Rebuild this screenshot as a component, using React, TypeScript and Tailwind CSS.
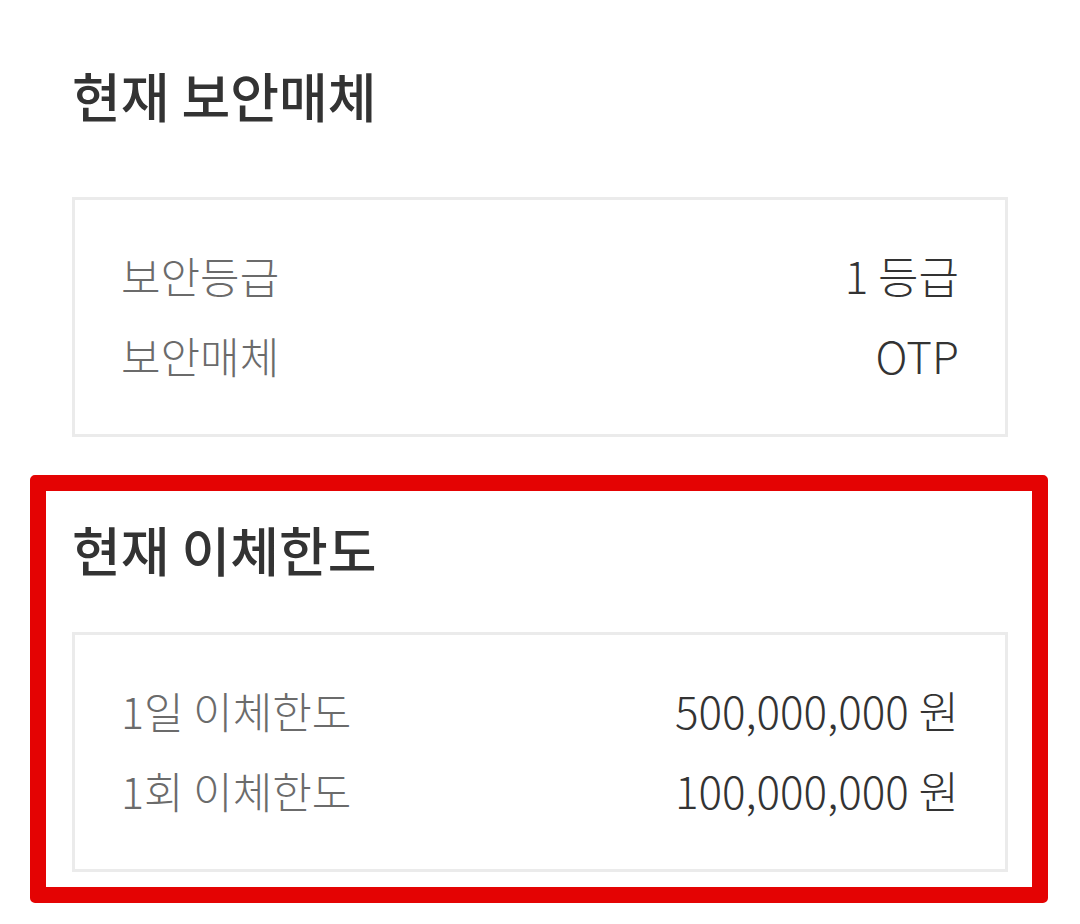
const FONT = "font-['Noto_Sans_CJK_KR','Noto_Sans',sans-serif]";

type Row = { label: string; value: string };

function InfoBox({ rows }: { rows: Row[] }) {
  return (
    <div className="border-[3px] border-[#ebebeb] bg-white px-[46px] pt-[35px] pb-[39px]">
      {rows.map((r) => (
        <div key={r.label} className="flex h-[80px] items-center justify-between">
          <span className="text-[43px] font-light text-[#6b6b6b]">{r.label}</span>
          <span className="text-[44px] font-light text-[#333333]">{r.value}</span>
        </div>
      ))}
    </div>
  );
}

export default function App() {
  return (
    <div className={`${FONT} min-h-[924px] w-[1080px] bg-white px-[72px] pt-[59px]`}>
      <h2 className="h-[72px] text-[53px] leading-[72px] font-medium text-[#333333]">현재 보안매체</h2>
      <div className="mt-[66px]">
        <InfoBox
          rows={[
            { label: "보안등급", value: "1 등급" },
            { label: "보안매체", value: "OTP" },
          ]}
        />
      </div>

      {/* 강조 표시된 이체한도 영역 */}
      <div className="relative mt-[76px]">
        <h2 className="h-[72px] text-[53px] leading-[72px] font-medium text-[#333333]">현재 이체한도</h2>
        <div className="mt-[47px]">
          <InfoBox
            rows={[
              { label: "1일 이체한도", value: "500,000,000 원" },
              { label: "1회 이체한도", value: "100,000,000 원" },
            ]}
          />
        </div>
        <div className="pointer-events-none absolute top-[-38px] right-[-40px] bottom-[-31px] left-[-42px] rounded-[5px] border-[16px] border-[#e40303]" />
      </div>
    </div>
  );
}
